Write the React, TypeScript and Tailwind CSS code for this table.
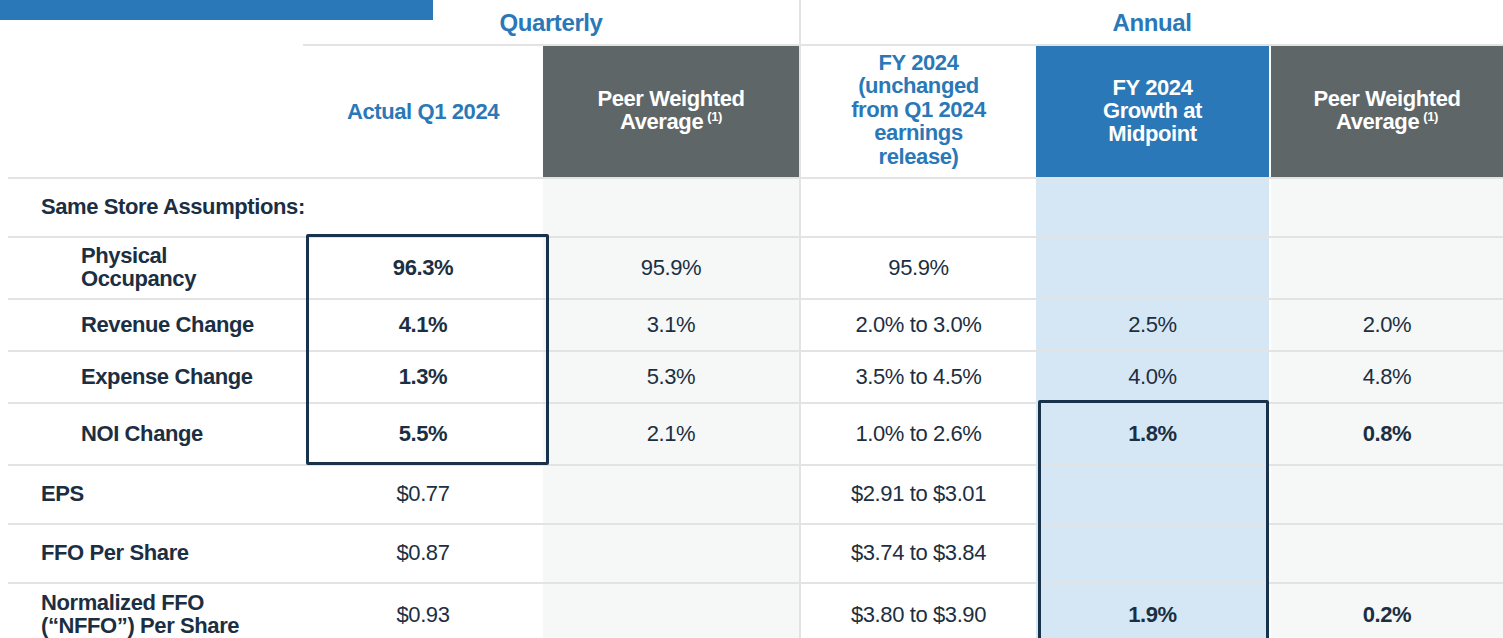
const NAVY = "text-[#1c2f42]";

type Row = {
  label: React.ReactNode;
  sub: boolean;
  h: string;
  actual: string;
  actualBold?: boolean;
  peerQ: string;
  fy: string;
  mid: string;
  peerA: string;
  annualBold?: boolean;
};

const rows: Row[] = [
  { label: "Same Store Assumptions:", sub: false, h: "h-[59px]", actual: "", peerQ: "", fy: "", mid: "", peerA: "" },
  {
    label: (
      <>
        Physical
        <br />
        Occupancy
      </>
    ),
    sub: true,
    h: "h-[62px]",
    actual: "96.3%",
    actualBold: true,
    peerQ: "95.9%",
    fy: "95.9%",
    mid: "",
    peerA: "",
  },
  { label: "Revenue Change", sub: true, h: "h-[52px]", actual: "4.1%", actualBold: true, peerQ: "3.1%", fy: "2.0% to 3.0%", mid: "2.5%", peerA: "2.0%" },
  { label: "Expense Change", sub: true, h: "h-[52px]", actual: "1.3%", actualBold: true, peerQ: "5.3%", fy: "3.5% to 4.5%", mid: "4.0%", peerA: "4.8%" },
  { label: "NOI Change", sub: true, h: "h-[62px]", actual: "5.5%", actualBold: true, peerQ: "2.1%", fy: "1.0% to 2.6%", mid: "1.8%", peerA: "0.8%", annualBold: true },
  { label: "EPS", sub: false, h: "h-[59px]", actual: "$0.77", peerQ: "", fy: "$2.91 to $3.01", mid: "", peerA: "" },
  { label: "FFO Per Share", sub: false, h: "h-[59px]", actual: "$0.87", peerQ: "", fy: "$3.74 to $3.84", mid: "", peerA: "" },
  {
    label: (
      <>
        Normalized FFO
        <br />
        (“NFFO”) Per Share
      </>
    ),
    sub: false,
    h: "h-[64px]",
    actual: "$0.93",
    peerQ: "",
    fy: "$3.80 to $3.90",
    mid: "1.9%",
    peerA: "0.2%",
    annualBold: true,
  },
];

const GRID = "grid grid-cols-[303px_240px_256px_2px_235px_233px_2px_232px]";
const CELL = "flex items-center justify-center border-t-2 border-[#e3e3e3] pb-[2px]";

function Sup() {
  return <span className="relative -top-[8px] ml-1 text-[13px] font-bold">(1)</span>;
}

export default function App() {
  return (
    <div className="relative w-[1503px] h-[638px] overflow-hidden bg-white font-['Liberation_Sans',Arial,sans-serif] text-[22px] tracking-[-0.4px] leading-[23px]">
      {/* group header */}
      <div className={`${GRID} h-[46px]`}>
        <div className="relative">
          <div className="w-[433px] h-[20px] bg-[#2a78b7]" />
        </div>
        <div className="col-span-2 flex items-center justify-center border-b-2 border-[#e3e3e3] text-[24px] font-bold text-[#2a78b7]">
          Quarterly
        </div>
        <div className="bg-[#e3e3e3]" />
        <div className="col-span-4 flex items-center justify-center border-b-2 border-[#e3e3e3] text-[24px] font-bold text-[#2a78b7]">
          Annual
        </div>
      </div>

      {/* column header */}
      <div className={`${GRID} h-[131px] font-bold text-center`}>
        <div />
        <div className="flex items-center justify-center text-[#2a78b7]">Actual Q1 2024</div>
        <div className="flex items-center justify-center bg-[#5e6667] text-white">
          <div>
            Peer Weighted
            <br />
            Average
            <Sup />
          </div>
        </div>
        <div className="bg-[#e3e3e3]" />
        <div className="flex items-center justify-center pb-[4px] leading-[23.5px] text-[#2a78b7]">
          <div>
            FY 2024
            <br />
            (unchanged
            <br />
            from Q1 2024
            <br />
            earnings
            <br />
            release)
          </div>
        </div>
        <div className="flex items-center justify-center pb-[3px] bg-[#2a78b7] text-white">
          <div>
            FY 2024
            <br />
            Growth at
            <br />
            Midpoint
          </div>
        </div>
        <div />
        <div className="flex items-center justify-center bg-[#5e6667] text-white">
          <div>
            Peer Weighted
            <br />
            Average
            <Sup />
          </div>
        </div>
      </div>

      {/* body */}
      {rows.map((r, i) => (
        <div key={i} className={`${GRID} ${r.h} ${NAVY}`}>
          <div
            className={`ml-2 flex items-center whitespace-nowrap border-t-2 border-[#e3e3e3] pb-[2px] font-bold ${
              r.sub ? "pl-[73px]" : "pl-[33px]"
            }`}
          >
            <div>{r.label}</div>
          </div>
          <div className={`${CELL} ${r.actualBold ? "font-bold" : ""}`}>{r.actual}</div>
          <div className={`${CELL} bg-[#f6f7f7]`}>{r.peerQ}</div>
          <div className="bg-[#e3e3e3]" />
          <div className={CELL}>{r.fy}</div>
          <div className={`${CELL} bg-[#d5e7f5] ${r.annualBold ? "font-bold" : ""}`}>{r.mid}</div>
          <div className="border-t-2 border-[#e3e3e3]" />
          <div className={`${CELL} bg-[#f6f7f7] ${r.annualBold ? "font-bold" : ""}`}>{r.peerA}</div>
        </div>
      ))}

      {/* highlight boxes */}
      <div className="pointer-events-none absolute left-[306px] top-[234px] w-[243px] h-[231px] border-[3px] border-[#17324a] rounded-[2px]" />
      <div className="pointer-events-none absolute left-[1038px] top-[400px] w-[231px] h-[260px] border-[3px] border-[#17324a] rounded-[2px]" />
    </div>
  );
}
